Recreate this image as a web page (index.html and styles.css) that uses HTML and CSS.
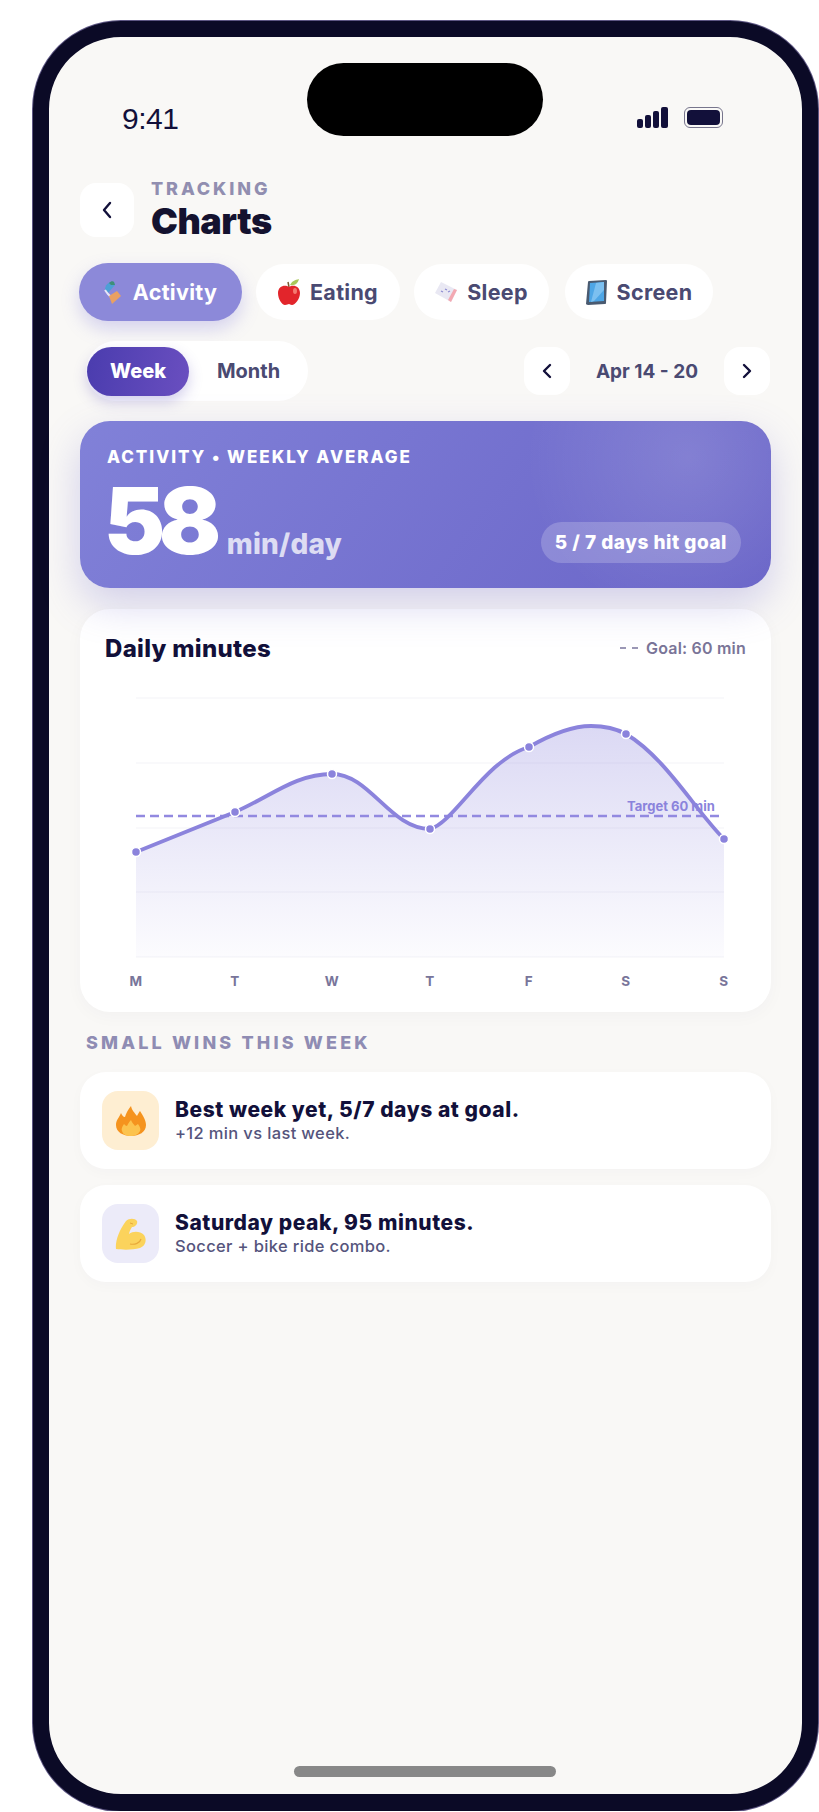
FILE: index.html
```html
<!DOCTYPE html>
<html lang="en">
<head>
  <meta charset="UTF-8">
  <title>Charts</title>
  <link rel="stylesheet" href="styles.css">
</head>
<body>
  <div class="phone">
    <div class="island"></div>

    <!-- Status bar -->
    <div class="status">
      <span class="time">9:41</span>
      <div class="status-icons">
        <svg width="31" height="21" viewBox="0 0 31 21">
          <rect x="0" y="12" width="6" height="9" rx="2" fill="#12103a"/>
          <rect x="8" y="8" width="6" height="13" rx="2" fill="#12103a"/>
          <rect x="16" y="4" width="6" height="17" rx="2" fill="#12103a"/>
          <rect x="24" y="0" width="7" height="21" rx="2" fill="#12103a"/>
        </svg>
        <div class="battery"><div class="battery-fill"></div></div>
      </div>
    </div>

    <!-- Header -->
    <div class="header">
      <div class="square-btn back-btn">
        <svg width="12" height="18" viewBox="0 0 12 18"><path d="M9 2 L3 9 L9 16" class="chev"/></svg>
      </div>
      <div class="titles">
        <div class="eyebrow">TRACKING</div>
        <h1>Charts</h1>
      </div>
    </div>

    <!-- Category chips -->
    <div class="chips">
      <div class="chip chip-active">
        <svg width="17" height="23" viewBox="0 0 17 23">
          <path d="M1 9 C1 4 5 0 10 1 L11 4 L4 12 Z" fill="#4d9fd6"/>
          <path d="M5 2 C7 0 9 0 10 1 L11 4 L7 4 Z" fill="#3f8f78"/>
          <path d="M1 9 L4 13 L8 17" stroke="#e6e5f7" stroke-width="2" fill="none"/>
          <path d="M5 15 L13 10 L17 15 L8 23 Z" fill="#e9a063"/>
        </svg>
        Activity
      </div>
      <div class="chip chip-eating">
        <svg width="22" height="26" viewBox="0 0 22 26">
          <path d="M12 6 C14 2 17 1 21 0 C20 4 17 7 12 6 Z" fill="#a9c75a"/>
          <path d="M10 3 L11 8" stroke="#7a5a30" stroke-width="1.5"/>
          <path d="M11 8 C15 5 22 7 22 14 C22 20 17 26 14 26 C12 26 12 25 11 25 C10 25 9 26 7 26 C4 26 0 20 0 14 C0 7 7 5 11 8 Z" fill="#e2252b"/>
          <ellipse cx="17" cy="12" rx="2" ry="3" fill="#f47a70"/>
        </svg>
        Eating
      </div>
      <div class="chip chip-sleep">
        <svg width="22" height="20" viewBox="0 0 22 20">
          <path d="M6 0 L22 8 L16 20 L0 11 Z" fill="#e9e8f3"/>
          <path d="M19 7 L22 8 L16 20 L13 18 Z" fill="#f3a9b2"/>
          <path d="M6 9 L8 10 M10 7 L12 8 M13 10 L15 9" stroke="#8c8ad0" stroke-width="1.2"/>
        </svg>
        Sleep
      </div>
      <div class="chip chip-screen">
        <svg width="21" height="25" viewBox="0 0 21 25">
          <path d="M3 1 L20 0 C21 0 21 1 21 1 L20 23 C20 24 19 24 19 24 L2 25 C1 25 0 24 0 24 L2 2 C2 1 3 1 3 1 Z" fill="#4a5a70"/>
          <path d="M4 3 L18 2 L18 21 L3 22 Z" fill="#4ea6e6"/>
          <path d="M10 3 L18 2 L18 10 L8 21 L5 22 Z" fill="#7cc0f0"/>
        </svg>
        Screen
      </div>
    </div>

    <!-- Range toggle and date stepper -->
    <div class="controls">
      <div class="toggle">
        <div class="toggle-item toggle-on">Week</div>
        <div class="toggle-item toggle-off">Month</div>
      </div>
      <div class="stepper">
        <div class="square-btn step-btn">
          <svg width="12" height="16" viewBox="0 0 12 16"><path d="M9 2 L3 8 L9 14" class="chev"/></svg>
        </div>
        <span class="date-range">Apr 14 - 20</span>
        <div class="square-btn step-btn">
          <svg width="12" height="16" viewBox="0 0 12 16"><path d="M3 2 L9 8 L3 14" class="chev"/></svg>
        </div>
      </div>
    </div>

    <!-- Weekly average -->
    <div class="hero">
      <div class="hero-label">ACTIVITY • WEEKLY AVERAGE</div>
      <div class="hero-row">
        <div class="hero-value">
          <span class="hero-number">58</span>
          <span class="hero-unit">min/day</span>
        </div>
        <div class="hero-pill">5 / 7 days hit goal</div>
      </div>
    </div>

    <!-- Daily minutes chart -->
    <div class="chart-card">
      <div class="chart-head">
        <h2>Daily minutes</h2>
        <div class="goal-key"><span class="goal-dash"></span><span>Goal: 60 min</span></div>
      </div>
      <svg class="chart" width="640" height="300" viewBox="0 0 640 300">
        <defs>
          <linearGradient id="areaFill" x1="0" y1="0" x2="0" y2="1">
            <stop offset="0" stop-color="#8f88dd" stop-opacity="0.32"/>
            <stop offset="1" stop-color="#8f88dd" stop-opacity="0.03"/>
          </linearGradient>
        </defs>
        <g class="grid">
          <line x1="31" x2="619" y1="8" y2="8"/>
          <line x1="31" x2="619" y1="73" y2="73"/>
          <line x1="31" x2="619" y1="138" y2="138"/>
          <line x1="31" x2="619" y1="202" y2="202"/>
          <line x1="31" x2="619" y1="267" y2="267"/>
        </g>
        <path d="M31 162 L130 122 C165 107 190 84 227 84 C265 84 285 139 325 139 C350 132 380 70 424 57 C450 42 470 36 486 36 C500 36 510 38 521 44 C560 67 590 120 619 149 L619 267 L31 267 Z" fill="url(#areaFill)"/>
        <line class="target" x1="31" x2="619" y1="126" y2="126"/>
        <text class="target-text" x="522" y="121">Target 60 min</text>
        <path class="curve" d="M31 162 L130 122 C165 107 190 84 227 84 C265 84 285 139 325 139 C350 132 380 70 424 57 C450 42 470 36 486 36 C500 36 510 38 521 44 C560 67 590 120 619 149"/>
        <g class="dots">
          <circle cx="31" cy="162" r="4.5"/>
          <circle cx="130" cy="122" r="4.5"/>
          <circle cx="227" cy="84" r="4.5"/>
          <circle cx="325" cy="139" r="4.5"/>
          <circle cx="424" cy="57" r="4.5"/>
          <circle cx="521" cy="44" r="4.5"/>
          <circle cx="619" cy="149" r="4.5"/>
        </g>
        <g class="days">
          <text x="31" y="296">M</text>
          <text x="130" y="296">T</text>
          <text x="227" y="296">W</text>
          <text x="325" y="296">T</text>
          <text x="424" y="296">F</text>
          <text x="521" y="296">S</text>
          <text x="619" y="296">S</text>
        </g>
      </svg>
    </div>

    <!-- Small wins -->
    <div class="section-label">SMALL WINS THIS WEEK</div>
    <div class="win">
      <div class="win-icon icon-fire">
        <svg width="30" height="32" viewBox="0 0 30 32">
          <path d="M15 1 C16 6 19 8 21 11 C22 9 23 7 24 6 C27 11 30 15 30 20 C30 27 23 31 15 31 C7 31 0 27 0 20 C0 15 3 13 5 8 C6 10 7 12 9 12 C10 8 12 5 15 1 Z" fill="#f5931e"/>
          <path d="M15 15 C16 18 18 19 19 21 C20 20 21 20 22 19 C24 22 25 24 24 26 C22 30 18 31 15 31 C11 31 7 30 6 26 C5 24 6 22 8 19 C9 20 10 21 11 21 C12 19 13 17 15 15 Z" fill="#fcc34e"/>
        </svg>
      </div>
      <div class="win-text">
        <div class="win-title">Best week yet, 5/7 days at goal.</div>
        <div class="win-sub">+12 min vs last week.</div>
      </div>
    </div>
    <div class="win">
      <div class="win-icon icon-arm">
        <svg width="31" height="32" viewBox="0 0 31 32">
          <path d="M11 3 C14 0 20 0 22 3 C23 6 20 9 17 9 C15 12 14 15 14 16 C18 13 25 13 29 17 C32 21 31 28 25 30 C18 32 8 32 1 31 C0 24 4 12 11 3 Z" fill="#fbd35c"/>
          <path d="M15 26 C20 27 25 25 26 21" fill="none" stroke="#e8a93a" stroke-width="1.2"/>
          <path d="M15 5 L18 6" stroke="#e8a93a" stroke-width="1"/>
        </svg>
      </div>
      <div class="win-text">
        <div class="win-title">Saturday peak, 95 minutes.</div>
        <div class="win-sub">Soccer + bike ride combo.</div>
      </div>
    </div>

    <div class="home-bar"></div>
  </div>
</body>
</html>
```

FILE: styles.css
```css
* {
  box-sizing: border-box;
}
body {
  margin: 0;
  background-color: #fff;
  font-family: Inter, "Liberation Sans", sans-serif;
  color: #12103a;
}
.phone {
  position: relative;
  width: 785px;
  height: 1790px;
  margin: 21px 0 0 33px;
  padding: 0 31px;
  background-color: #f9f8f6;
  border: 16px solid #0b0a26;
  border-bottom-width: 17px;
  border-radius: 88px;
  box-shadow: 0 0 0 1px #5d5683;
}
.island {
  position: absolute;
  top: 26px;
  left: 258px;
  width: 236px;
  height: 73px;
  background-color: #000;
  border-radius: 37px;
}
.status {
  display: flex;
  justify-content: space-between;
  align-items: center;
  padding: 58px 0 0 42px;
  height: 106px;
}
.time {
  font-family: "Liberation Sans", Arial, sans-serif;
  font-size: 30px;
  letter-spacing: -0.5px;
  color: #12103a;
}
.status-icons {
  display: flex;
  align-items: center;
  gap: 16px;
  padding: 0 48px 4px 0;
}
.battery {
  width: 39px;
  height: 21px;
  padding: 2px;
  border: 1px solid #77758c;
  border-radius: 6px;
}
.battery-fill {
  height: 100%;
  background-color: #12103a;
  border-radius: 4px;
}
.square-btn {
  display: flex;
  justify-content: center;
  align-items: center;
  background-color: #fff;
  border-radius: 16px;
}
.chev {
  fill: none;
  stroke: #12103a;
  stroke-width: 2.4;
  stroke-linecap: round;
  stroke-linejoin: round;
}
.header {
  display: flex;
  align-items: center;
  gap: 17px;
  margin-top: 40px;
  height: 54px;
}
.back-btn {
  width: 54px;
  height: 54px;
}
.eyebrow {
  font-size: 18px;
  font-weight: 800;
  letter-spacing: 2.9px;
  color: #918eb0;
  line-height: 20px;
}
h1 {
  margin: 2px 0 0;
  font-size: 36px;
  font-weight: 900;
  letter-spacing: -0.5px;
  line-height: 40px;
  color: #14122f;
}
.chips {
  display: flex;
  align-items: center;
  gap: 14px;
  margin: 26px 0 0 -1px;
}
.chip {
  display: flex;
  justify-content: center;
  align-items: center;
  gap: 10px;
  height: 56px;
  background-color: #fff;
  border-radius: 28px;
  font-size: 21.5px;
  font-weight: 700;
  letter-spacing: 0.3px;
  color: #4a4a72;
}
.chip-active {
  width: 163px;
  height: 58px;
  gap: 12px;
  background-color: #8c89d9;
  border-radius: 29px;
  color: #fff;
  box-shadow: 0 8px 18px rgba(120, 112, 215, 0.28);
}
.chip-eating {
  width: 144px;
}
.chip-sleep {
  width: 135px;
}
.chip-screen {
  width: 148px;
  margin-left: 2px;
}
.controls {
  display: flex;
  justify-content: space-between;
  align-items: center;
  margin-top: 20px;
}
.toggle {
  display: flex;
  align-items: center;
  width: 222px;
  height: 60px;
  margin-left: 6px;
  padding: 0 1px;
  background-color: #fff;
  border-radius: 30px;
}
.toggle-item {
  width: 115px;
  text-align: center;
  font-size: 20px;
  font-weight: 700;
  color: #4a4a72;
}
.toggle-off {
  padding-left: 4px;
}
.toggle-on {
  width: 102px;
  height: 49px;
  line-height: 49px;
  background: linear-gradient(100deg, #4a3cae, #6a4fc0);
  border-radius: 25px;
  font-weight: 800;
  color: #fff;
  box-shadow: 0 6px 14px rgba(80, 62, 180, 0.25);
}
.stepper {
  display: flex;
  align-items: center;
  gap: 26px;
  padding-right: 1px;
}
.step-btn {
  width: 46px;
  height: 48px;
}
.date-range {
  font-size: 19px;
  font-weight: 700;
  color: #4a4a72;
}
.hero {
  position: relative;
  z-index: 1;
  display: flex;
  flex-direction: column;
  height: 167px;
  margin-top: 20px;
  padding: 26px 30px 25px 27px;
  background:
    radial-gradient(circle at 88% 22%, rgba(255, 255, 255, 0.14), rgba(255, 255, 255, 0) 26%),
    linear-gradient(125deg, #8181d8, #6a65c8);
  border-radius: 30px;
  color: #fff;
  box-shadow: 0 16px 40px rgba(108, 100, 200, 0.28);
}
.hero-label {
  font-size: 17px;
  font-weight: 800;
  letter-spacing: 1.96px;
  line-height: 20px;
}
.hero-row {
  display: flex;
  justify-content: space-between;
  align-items: flex-end;
  margin-top: auto;
}
.hero-value {
  display: flex;
  align-items: baseline;
  gap: 12px;
  margin-bottom: 2px;
}
.hero-number {
  margin-left: -3px;
  font-size: 92px;
  font-weight: 900;
  letter-spacing: -6.5px;
  line-height: 76px;
}
.hero-unit {
  font-size: 28px;
  font-weight: 800;
  letter-spacing: 0.2px;
  color: rgba(255, 255, 255, 0.75);
}
.hero-pill {
  height: 41px;
  padding: 0 14px;
  line-height: 41px;
  background-color: rgba(255, 255, 255, 0.2);
  border-radius: 21px;
  font-size: 19px;
  font-weight: 800;
  letter-spacing: 0.5px;
}
.chart-card {
  height: 403px;
  margin-top: 21px;
  padding: 24px 25px 0;
  background-color: #fff;
  border-radius: 30px;
  box-shadow: 0 4px 18px rgba(40, 36, 90, 0.03);
}
.chart-head {
  display: flex;
  justify-content: space-between;
  align-items: center;
  height: 30px;
  margin-bottom: 27px;
}
h2 {
  margin: 0;
  font-size: 24px;
  font-weight: 800;
  letter-spacing: 0.3px;
  color: #12103a;
}
.goal-key {
  display: flex;
  align-items: center;
  gap: 8px;
  font-size: 16px;
  font-weight: 600;
  letter-spacing: 0.2px;
  color: #7a7598;
}
.goal-dash {
  width: 18px;
  border-top: 2px dashed #9a97b5;
}
.chart {
  display: block;
}
.grid line {
  stroke: #f4f3f8;
  stroke-width: 1.2;
}
.target {
  stroke: #9289e0;
  stroke-width: 2.5;
  stroke-dasharray: 9 5;
}
.target-text {
  font-size: 13px;
  font-weight: 700;
  fill: #8b83dc;
}
.curve {
  fill: none;
  stroke: #8b83dc;
  stroke-width: 3.8;
  stroke-linecap: round;
}
.dots circle {
  fill: #8b83dc;
  stroke: #fff;
  stroke-width: 1.5;
}
.days text {
  font-size: 13.5px;
  font-weight: 700;
  fill: #78759a;
  text-anchor: middle;
  letter-spacing: 0.5px;
}
.section-label {
  margin: 21px 0 0 6px;
  font-size: 18px;
  font-weight: 800;
  letter-spacing: 3.15px;
  line-height: 20px;
  color: #8f8cb3;
}
.win {
  display: flex;
  align-items: center;
  gap: 16px;
  height: 97px;
  margin-top: 16px;
  padding-left: 22px;
  background-color: #fff;
  border-radius: 26px;
  box-shadow: 0 4px 14px rgba(40, 36, 90, 0.025);
}
.section-label + .win {
  margin-top: 19px;
}
.win-icon {
  display: flex;
  justify-content: center;
  align-items: center;
  width: 57px;
  height: 59px;
  border-radius: 16px;
}
.icon-fire {
  background-color: #feeed2;
}
.icon-arm {
  background-color: #ecebf9;
}
.win-title {
  font-size: 21px;
  font-weight: 800;
  letter-spacing: 0.55px;
  line-height: 26px;
  color: #12103a;
}
.win-sub {
  font-size: 16.5px;
  font-weight: 500;
  letter-spacing: 0.35px;
  line-height: 21px;
  color: #55547c;
}
.home-bar {
  position: absolute;
  left: 245px;
  bottom: 17px;
  width: 262px;
  height: 11px;
  background-color: #888;
  border-radius: 6px;
}
```
